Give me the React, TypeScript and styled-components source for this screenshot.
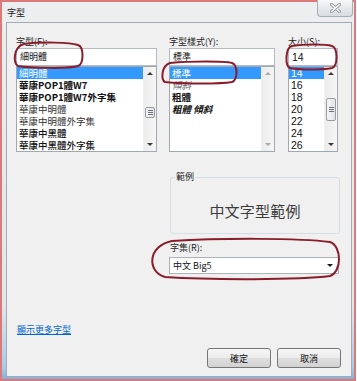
import React from "react";
import styled, { createGlobalStyle } from "styled-components";

const UI_FONT = `"Noto Sans CJK TC", "Noto Sans", sans-serif`;
const NUM_FONT = `"Liberation Sans", "DejaVu Sans", sans-serif`;

const GlobalStyle = createGlobalStyle`
  html, body { margin: 0; padding: 0; background: #ffffff; }
  body { font-family: ${UI_FONT}; color: #1a1a1a; }
  * { box-sizing: border-box; }
`;

const Window = styled.div`
  position: relative;
  width: 356px;
  height: 381px;
  border: 2px solid #dc7a7a;
  padding: 0 2px 2px 4px;
  display: flex;
  flex-direction: column;
  background: linear-gradient(180deg, #eceef0 0%, #e4e7ea 80%, #a9cbe6 97%, #7fb2dc 100%);
`;

const TitleBar = styled.div`
  height: 20px;
  display: flex;
  align-items: flex-start;
  margin-right: -1px;
`;

const Title = styled.span`
  font-size: 9px;
  line-height: 12px;
  margin: 5px 0 0 1px;
  color: #222;
`;

const CloseButton = styled.div`
  margin: -2px 0 0 auto;
  width: 36px;
  height: 17px;
  border: 1px solid #a5adb6;
  border-top: none;
  border-radius: 0 0 4px 4px;
  background: linear-gradient(#f7f8f9, #e6e9ec 50%, #d8dde2);
  display: flex;
  align-items: center;
  justify-content: center;
`;

const Client = styled.div`
  flex: 1;
  border: 1px solid #a3acb5;
  background: #f0f0f0;
  padding: 12px 10px 0 9px;
  display: flex;
  flex-direction: column;
`;

const TopRow = styled.div`
  display: flex;
`;

const Column = styled.div<{ $width: number; $offset: number }>`
  width: ${(p) => p.$width}px;
  margin-left: ${(p) => p.$offset}px;
  display: flex;
  flex-direction: column;
`;

const FieldLabel = styled.div`
  font-size: 9px;
  line-height: 13px;
  height: 13px;
  color: #1e1e1e;
  white-space: nowrap;
`;

const TextBox = styled.div<{ $size?: number; $numeric?: boolean }>`
  height: 18px;
  background: #ffffff;
  border: 1px solid #b5bac2;
  padding-left: 3px;
  font-family: ${(p) => (p.$numeric ? NUM_FONT : UI_FONT)};
  font-size: ${(p) => p.$size ?? 9}px;
  line-height: 16px;
  color: #111;
  white-space: nowrap;
`;

const ListBox = styled.div`
  height: 86px;
  background: #ffffff;
  border: 1px solid #a2a8b0;
  display: flex;
`;

const Items = styled.div`
  flex: 1;
  min-width: 0;
  display: flex;
  flex-direction: column;
`;

const Item = styled.div<{
  $selected?: boolean;
  $weight?: number;
  $italic?: boolean;
  $color?: string;
  $size?: number;
  $numeric?: boolean;
}>`
  height: 12px;
  line-height: 12px;
  font-family: ${(p) => (p.$numeric ? NUM_FONT : UI_FONT)};
  font-size: ${(p) => p.$size ?? 9.5}px;
  padding-left: 2px;
  white-space: nowrap;
  font-weight: ${(p) => p.$weight ?? 400};
  font-style: ${(p) => (p.$italic ? "italic" : "normal")};
  color: ${(p) => (p.$selected ? "#ffffff" : p.$color ?? "#111")};
  background: ${(p) => (p.$selected ? "#3399ff" : "transparent")};
`;

const ScrollBar = styled.div`
  width: 13px;
  display: flex;
  flex-direction: column;
  background: linear-gradient(90deg, #ececec, #f6f6f6);
  border-left: 1px solid #f0f0f0;
`;

const ArrowCell = styled.div`
  height: 13px;
  display: flex;
  align-items: center;
  justify-content: center;
`;

const Arrow = styled.div<{ $down?: boolean; $disabled?: boolean }>`
  width: 0;
  height: 0;
  border-left: 3px solid transparent;
  border-right: 3px solid transparent;
  ${(p) =>
    p.$down
      ? `border-top: 3px solid ${p.$disabled ? "#a8a8a8" : "#3a3a3a"};`
      : `border-bottom: 3px solid ${p.$disabled ? "#a8a8a8" : "#3a3a3a"};`}
`;

const Track = styled.div`
  flex: 1;
  display: flex;
  flex-direction: column;
`;

const Thumb = styled.div<{ $top: number; $height: number }>`
  margin: ${(p) => p.$top}px 1px 0 1px;
  height: ${(p) => p.$height}px;
  border: 1px solid #979ca3;
  border-radius: 2px;
  background: linear-gradient(90deg, #f5f5f5, #e2e5e9);
  display: flex;
  align-items: center;
  justify-content: center;
`;

const Grip = styled.div`
  width: 5px;
  height: 5px;
  background: repeating-linear-gradient(180deg, #6f7378 0 1px, transparent 1px 2px);
`;

const LowerPane = styled.div`
  margin-left: 153px;
  width: 171px;
  display: flex;
  flex-direction: column;
`;

const Group = styled.fieldset`
  margin: 19px 0 0 1px;
  padding: 0;
  height: 63px;
  min-width: 0;
  border: 1px solid #d6dde3;
  border-radius: 3px;
`;

const GroupLegend = styled.legend`
  margin-left: 4px;
  padding: 0 1px;
  font-size: 9px;
  line-height: 12px;
  color: #1e1e1e;
`;

const SampleText = styled.div`
  margin-top: 7px;
  height: 40px;
  display: flex;
  align-items: center;
  justify-content: center;
  font-size: 15px;
  color: #3c3c3c;
  letter-spacing: 0.2px;
`;

const CharsetLabel = styled(FieldLabel)`
  margin: 8px 0 0 1px;
  line-height: 12px;
  height: 12px;
`;

const ComboBox = styled.div`
  margin-top: 3px;
  width: 170px;
  height: 17px;
  background: #ffffff;
  border: 1px solid #adb2b9;
  display: flex;
  align-items: center;
  justify-content: space-between;
  padding: 0 5px 0 3px;
  font-size: 9px;
  color: #111;
`;

const ComboArrow = styled.div`
  width: 0;
  height: 0;
  border-left: 3px solid transparent;
  border-right: 3px solid transparent;
  border-top: 3px solid #1a1a1a;
`;

const MoreLink = styled.a`
  margin: 49px 0 0 1px;
  align-self: flex-start;
  font-size: 9px;
  line-height: 13px;
  color: #0066cc;
  text-decoration: underline;
  cursor: pointer;
`;

const ButtonRow = styled.div`
  margin-top: 12px;
  display: flex;
  justify-content: flex-end;
  gap: 6px;
`;

const Button = styled.button`
  width: 64px;
  height: 20px;
  padding: 0;
  border: 1px solid #767676;
  border-radius: 3px;
  background: linear-gradient(180deg, #f6f6f6 0%, #ececec 48%, #dedede 52%, #d2d2d2 100%);
  font-family: ${UI_FONT};
  font-size: 9px;
  color: #111;
`;

const Overlay = styled.svg`
  position: absolute;
  left: -2px;
  top: -2px;
  width: 357px;
  height: 381px;
  pointer-events: none;
`;

type ListItem = {
  text: string;
  selected?: boolean;
  weight?: number;
  italic?: boolean;
  color?: string;
};

const fontItems: ListItem[] = [
  { text: "細明體", selected: true },
  { text: "華康POP1體W7", weight: 700 },
  { text: "華康POP1體W7外字集", weight: 700 },
  { text: "華康中明體", color: "#333" },
  { text: "華康中明體外字集", color: "#333" },
  { text: "華康中黑體", weight: 500 },
  { text: "華康中黑體外字集", weight: 500 },
];

const styleItems: ListItem[] = [
  { text: "標準", selected: true },
  { text: "傾斜", italic: true, color: "#666" },
  { text: "粗體", weight: 700 },
  { text: "粗體 傾斜", weight: 700, italic: true },
];

const sizeItems: ListItem[] = ["14", "16", "18", "20", "22", "24", "26"].map((t, i) => ({
  text: t,
  selected: i === 0,
}));

function Scroll({ thumb, disabled }: { thumb?: { top: number; height: number }; disabled?: boolean }) {
  return (
    <ScrollBar>
      <ArrowCell>
        <Arrow $disabled={disabled} />
      </ArrowCell>
      <Track>
        {thumb && (
          <Thumb $top={thumb.top} $height={thumb.height}>
            <Grip />
          </Thumb>
        )}
      </Track>
      <ArrowCell>
        <Arrow $down $disabled={disabled} />
      </ArrowCell>
    </ScrollBar>
  );
}

function List({
  items,
  size,
  numeric,
  thumb,
  disabled,
}: {
  items: ListItem[];
  size?: number;
  numeric?: boolean;
  thumb?: { top: number; height: number };
  disabled?: boolean;
}) {
  return (
    <ListBox>
      <Items>
        {items.map((it) => (
          <Item
            key={it.text}
            $selected={it.selected}
            $weight={it.weight}
            $italic={it.italic}
            $color={it.color}
            $size={size}
            $numeric={numeric}
          >
            {it.text}
          </Item>
        ))}
      </Items>
      <Scroll thumb={thumb} disabled={disabled} />
    </ListBox>
  );
}

export default function App() {
  return (
    <>
      <GlobalStyle />
      <Window>
        <TitleBar>
          <Title>字型</Title>
          <CloseButton>
            <svg width="11" height="10" viewBox="0 0 11 10">
              <path d="M1.5 1.5 L9.5 8.5 M9.5 1.5 L1.5 8.5" stroke="#8d959e" strokeWidth="3" strokeLinecap="round" />
              <path d="M1.5 1.5 L9.5 8.5 M9.5 1.5 L1.5 8.5" stroke="#ffffff" strokeWidth="1.4" strokeLinecap="round" />
            </svg>
          </CloseButton>
        </TitleBar>
        <Client>
          <TopRow>
            <Column $width={141} $offset={0}>
              <FieldLabel>字型(F):</FieldLabel>
              <TextBox>細明體</TextBox>
              <List items={fontItems} thumb={{ top: 27, height: 11 }} />
            </Column>
            <Column $width={106} $offset={12}>
              <FieldLabel>字型樣式(Y):</FieldLabel>
              <TextBox>標準</TextBox>
              <List items={styleItems} disabled />
            </Column>
            <Column $width={50} $offset={13}>
              <FieldLabel>大小(S):</FieldLabel>
              <TextBox $size={10.5} $numeric>14</TextBox>
              <List items={sizeItems} size={10.5} numeric thumb={{ top: 18, height: 23 }} />
            </Column>
          </TopRow>
          <LowerPane>
            <Group>
              <GroupLegend>範例</GroupLegend>
              <SampleText>中文字型範例</SampleText>
            </Group>
            <CharsetLabel>字集(R):</CharsetLabel>
            <ComboBox>
              <span>中文 Big5</span>
              <ComboArrow />
            </ComboBox>
          </LowerPane>
          <MoreLink>顯示更多字型</MoreLink>
          <ButtonRow>
            <Button>確定</Button>
            <Button>取消</Button>
          </ButtonRow>
        </Client>
        <Overlay viewBox="0 0 357 381">
          <g fill="none" stroke="#8a1d2c" strokeWidth="2">
            <path d="M24 44 C 40 42, 70 42, 78 45 C 84 47, 84 64, 78 66 C 70 69, 30 68, 18 66 C 13 64, 13 47, 24 44 Z" />
            <path d="M170 63 C 190 61, 225 61, 232 63 C 238 65, 238 80, 232 82 C 220 84, 185 84, 165 82 C 161 80, 161 66, 170 63 Z" />
            <path d="M292 46 C 305 44, 326 44, 332 46 C 338 48, 338 66, 332 68 C 322 70, 300 70, 290 68 C 285 66, 285 48, 292 46 Z" />
            <path d="M172 241 C 220 238, 300 238, 330 242 C 342 246, 342 272, 330 276 C 300 280, 210 280, 165 277 C 147 272, 147 246, 172 241 Z" />
          </g>
        </Overlay>
      </Window>
    </>
  );
}
